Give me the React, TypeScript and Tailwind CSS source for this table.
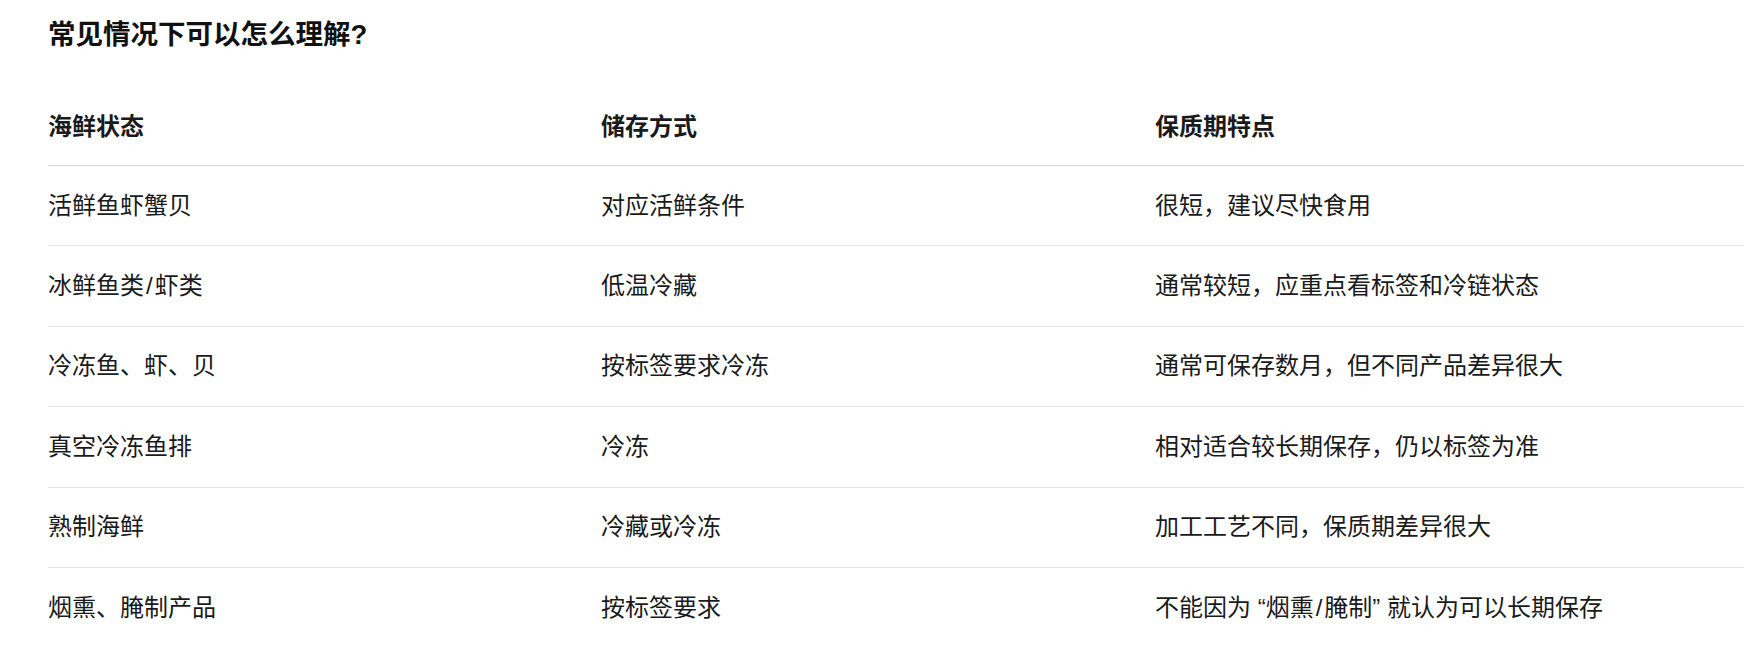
const rows = [
  ["活鲜鱼虾蟹贝", "对应活鲜条件", "很短，建议尽快食用"],
  ["冰鲜鱼类/虾类", "低温冷藏", "通常较短，应重点看标签和冷链状态"],
  ["冷冻鱼、虾、贝", "按标签要求冷冻", "通常可保存数月，但不同产品差异很大"],
  ["真空冷冻鱼排", "冷冻", "相对适合较长期保存，仍以标签为准"],
  ["熟制海鲜", "冷藏或冷冻", "加工工艺不同，保质期差异很大"],
  ["烟熏、腌制产品", "按标签要求", "不能因为 “烟熏/腌制” 就认为可以长期保存"],
];

const headers = ["海鲜状态", "储存方式", "保质期特点"];

// the slash sits a little looser in the reference font
const Cell = ({ text }: { text: string }) => {
  const parts = text.split("/");
  return (
    <div>
      {parts.map((p, k) => (
        <span key={k}>
          {k > 0 && <span className="mx-[2px]">/</span>}
          {p}
        </span>
      ))}
    </div>
  );
};

export default function App() {
  return (
    <div className="min-h-[664px] bg-white pl-[48px] pt-[15px] font-['Liberation_Sans','Noto_Sans_CJK_SC',sans-serif] text-[#1a1a1a]">
      <h2 className="text-[27.5px] leading-[40px] font-bold text-[#111]">常见情况下可以怎么理解?</h2>

      <div className="mt-[34px] w-[1696px]">
        <div className="grid h-[77px] grid-cols-[553px_554px_1fr] items-center border-b border-[#d6d6d6] text-[24px] font-semibold leading-[36px]">
          {headers.map((h) => (
            <div key={h}>{h}</div>
          ))}
        </div>
        {rows.map((r, i) => (
          <div
            key={i}
            className={`grid h-[80.4px] grid-cols-[553px_554px_1fr] items-center text-[24px] leading-[36px] ${
              i < rows.length - 1 ? "border-b border-[#e6e6e6]" : ""
            }`}
          >
            {r.map((c, j) => (
              <Cell key={j} text={c} />
            ))}
          </div>
        ))}
      </div>
    </div>
  );
}
